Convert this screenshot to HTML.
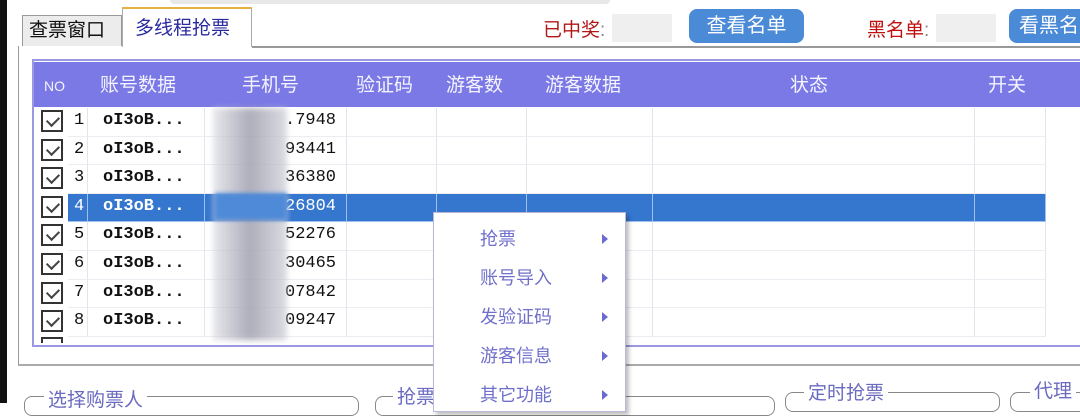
<!DOCTYPE html>
<html><head><meta charset="utf-8"><style>
*{margin:0;padding:0;box-sizing:border-box}
body{width:1080px;height:403px;overflow:hidden;background:#fff;position:relative;font-family:"Liberation Sans","Noto Sans CJK SC",sans-serif}
.a{position:absolute}
.hdr span{position:absolute;top:0;line-height:48px;color:#f4f4ff;font-size:19px}
.row{position:absolute;left:35px;width:1025px;height:28.6px}
.cell{position:absolute;top:0;height:100%;border-right:1px solid #e4e4ec;border-bottom:1px solid #ececf2}
.txt{font-family:"Liberation Mono","Noto Sans CJK SC",monospace;font-size:17px;color:#111;font-weight:bold}
.cb{position:absolute;left:6px;top:2px;width:22px;height:22px;border:2px solid #333;background:#fff}
.cb:after{content:"";position:absolute;left:4px;top:4px;width:10px;height:6px;border-left:2px solid #444;border-bottom:2px solid #444;transform:rotate(-45deg)}
.mi{position:absolute;left:46px;font-size:18px;color:#7070cc}
.ar{position:absolute;left:168px;width:0;height:0;border-top:5px solid transparent;border-bottom:5px solid transparent;border-left:6px solid #6a6ad0}
</style></head><body>
<div class="a" style="left:0;top:0;width:7px;height:403px;background:#111"></div>
<div class="a" style="left:170px;top:0;width:440px;height:4px;background:#e8e8e8;border-radius:0 0 10px 10px"></div>
<div class="a" style="left:22px;top:15px;width:100px;height:31px;background:#ececec;border:1px solid #999;border-bottom:none;font-size:19px;line-height:30px;padding-left:6px;color:#111">查票窗口</div>
<div class="a" style="left:122px;top:7px;width:130px;height:40px;background:#fff;border:1px solid #aaa;border-top:2px solid #e8b040;border-bottom:none;font-size:19px;line-height:40px;padding-left:12px;color:#2a2aa0">多线程抢票</div>
<div class="a" style="left:252px;top:46px;width:828px;height:2px;background:#999"></div>
<div class="a" style="left:18px;top:46px;width:4px;height:320px;border-left:1px solid #999"></div>
<div class="a" style="left:543px;top:15px;font-size:19px;color:#b01818">已中奖<span style="color:#888">:</span></div>
<div class="a" style="left:612px;top:14px;width:60px;height:28px;background:#efefef"></div>
<div class="a" style="left:689px;top:9px;width:115px;height:34px;background:#4a8ad6;border-radius:8px;color:#fff;font-size:20px;line-height:34px;text-align:center">查看名单</div>
<div class="a" style="left:867px;top:15px;font-size:19px;color:#c01010">黑名单<span style="color:#888">:</span></div>
<div class="a" style="left:936px;top:14px;width:60px;height:28px;background:#efefef"></div>
<div class="a" style="left:1009px;top:9px;width:90px;height:34px;background:#4a8ad6;border-radius:8px;color:#fff;font-size:20px;line-height:34px;padding-left:10px">看黑名单</div>
<div class="a" style="left:32px;top:59px;width:1048px;height:288px;border:2px solid #9a98e0;border-right:none"></div>
<div class="a hdr" style="left:34px;top:62px;width:1046px;height:45px;background:#7b79e6">
<span style="left:10px;font-size:14px">NO</span>
<span style="left:66px">账号数据</span>
<span style="left:208px">手机号</span>
<span style="left:322px">验证码</span>
<span style="left:412px">游客数</span>
<span style="left:511px">游客数据</span>
<span style="left:756px">状态</span>
<span style="left:954px">开关</span>
</div>
<div id="rows"></div>
<script>
var ph=[".7948","93441","36380","26804","52276","30465","07842","09247"];
var h='';
for(var i=0;i<8;i++){var t=108+i*28.6;var s=i==3;
h+='<div class="row" style="top:'+t+'px">';
h+='<div class="cb"></div>';
var cols=[[33,20],[53,117],[170,142],[312,90],[402,90],[492,126],[618,322],[940,71]];
for(var c=0;c<cols.length;c++){var bg=s?'background:#3576cf;':'';h+='<div class="cell" style="left:'+cols[c][0]+'px;width:'+cols[c][1]+'px;'+bg+(s?'border-color:#9ec0ee;':'')+'"></div>';}
var col=s?'#fff':'#111';
h+='<div class="a txt" style="left:39px;top:3px;font-weight:normal;color:'+col+'">'+(i+1)+'</div>';
h+='<div class="a txt" style="left:68px;top:3px;color:'+col+'">oI3oB...</div>';
h+='<div class="a txt" style="left:250px;top:3px;font-weight:normal;color:'+col+'">'+ph[i]+'</div>';
h+='</div>';}
document.getElementById('rows').innerHTML=h;
</script>
<div class="a" style="left:213px;top:108px;width:74px;height:232px;background:linear-gradient(90deg,rgba(215,215,225,0.6),rgba(160,160,175,0.85) 50%,rgba(205,205,215,0.7));filter:blur(3px)"></div>
<div class="a" style="left:215px;top:193px;width:72px;height:27px;background:#4e8ad8;filter:blur(2px)"></div>
<div class="a" style="left:41px;top:337px;width:22px;height:6px;border:2px solid #333;border-bottom:none"></div>
<div class="a" style="left:32px;top:345px;width:1048px;height:2px;background:#9a98e0"></div>
<div class="a" style="left:18px;top:364px;width:1062px;height:2px;background:#aaa"></div>
<div class="a" style="left:24px;top:396px;width:335px;height:20px;border:1px solid #888;border-radius:8px"></div>
<div class="a" style="left:44px;top:385px;background:#fff;padding:0 4px;font-size:19px;color:#6a6ac0">选择购票人</div>
<div class="a" style="left:375px;top:396px;width:400px;height:20px;border:1px solid #888;border-radius:8px"></div>
<div class="a" style="left:393px;top:382px;background:#fff;padding:0 4px;font-size:19px;color:#6a6ac0">抢票</div>
<div class="a" style="left:785px;top:392px;width:215px;height:20px;border:1px solid #888;border-radius:8px"></div>
<div class="a" style="left:804px;top:378px;background:#fff;padding:0 4px;font-size:19px;color:#6a6ac0">定时抢票</div>
<div class="a" style="left:1010px;top:392px;width:80px;height:20px;border:1px solid #888;border-radius:8px"></div>
<div class="a" style="left:1030px;top:376px;background:#fff;padding:0 4px;font-size:19px;color:#6a6ac0">代理</div>
<div class="a" style="left:433px;top:212px;width:193px;height:200px;background:#fff;border:1px solid #b8b8d8;box-shadow:3px 3px 4px rgba(0,0,0,0.25)">
<div class="mi" style="top:12px">抢票</div><div class="ar" style="top:21px"></div>
<div class="mi" style="top:51px">账号导入</div><div class="ar" style="top:60px"></div>
<div class="mi" style="top:90px">发验证码</div><div class="ar" style="top:99px"></div>
<div class="mi" style="top:129px">游客信息</div><div class="ar" style="top:138px"></div>
<div class="mi" style="top:168px">其它功能</div><div class="ar" style="top:177px"></div>
</div>
</body></html>
